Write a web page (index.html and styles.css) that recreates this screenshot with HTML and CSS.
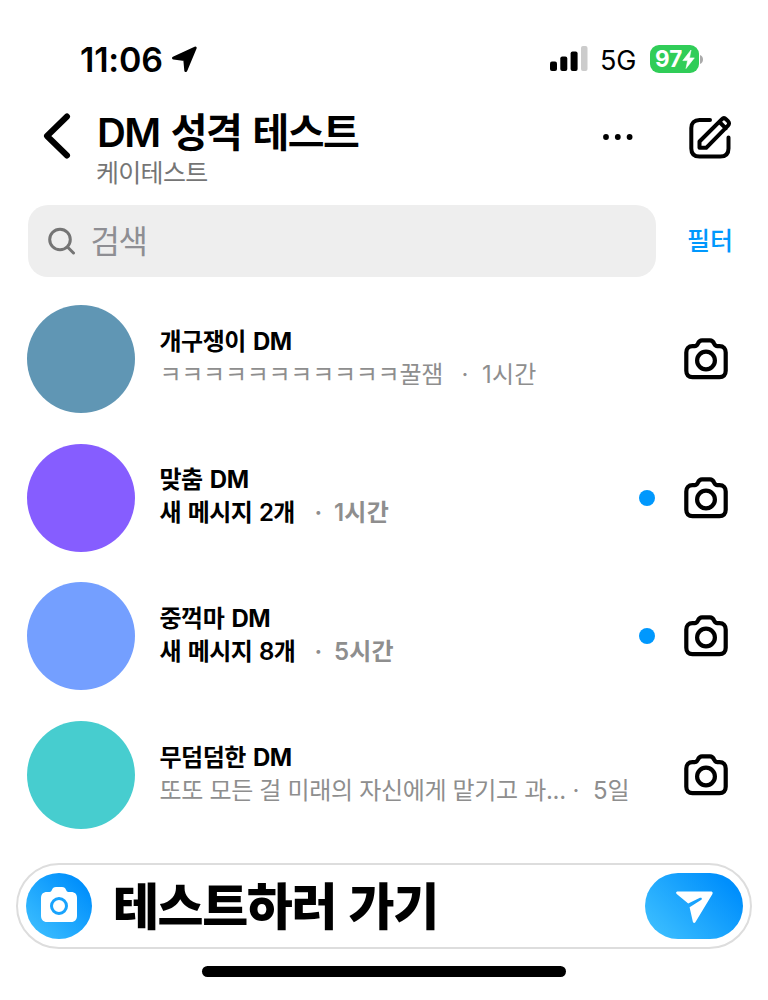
FILE: index.html
```html
<!DOCTYPE html>
<html lang="ko">
<head>
<meta charset="utf-8">
<title>DM 성격 테스트</title>
<link rel="stylesheet" href="styles.css">
</head>
<body>
<svg width="0" height="0" class="defs">
  <symbol id="camera" viewBox="0 0 44 42">
    <path d="M8.500 8.200h2.200c1.700 0 2.400-1 3.200-2.600C14.800 3.400 15.800 2.300 18 2.300h8c2.200 0 3.200 1.100 4.100 3.300.8 1.600 1.500 2.600 3.200 2.600h2.200c4 0 6.200 2.600 6.200 6.300v18.200c0 4-2.300 6.500-6.200 6.500h-27c-4 0-6.200-2.500-6.200-6.500V14.500c0-3.700 2.200-6.300 6.200-6.300z" fill="none" stroke="#000" stroke-width="4.200"/>
    <circle cx="22" cy="22.500" r="8.900" fill="none" stroke="#000" stroke-width="4.200"/>
  </symbol>
</svg>
<div class="phone">
  <header class="status">
    <span class="clock">11:06</span>
    <svg class="location" width="27" height="27" viewBox="0 0 27 27"><path d="M2.500 12 24.200 2 14.800 24.500 13.800 13.500z" stroke="#000" stroke-width="3" stroke-linejoin="round"/></svg>
    <svg class="signal" width="38" height="26" viewBox="0 0 38 26"><rect x="0" y="15.500" width="7" height="9.500" rx="2"/><rect x="10.300" y="10.500" width="7" height="14.500" rx="2"/><rect x="20.600" y="5.500" width="7" height="19.500" rx="2"/><rect x="31" y="0" width="6.500" height="25" rx="2" fill="#ccc"/></svg>
    <span class="network">5G</span>
    <span class="battery">97<svg width="13" height="19" viewBox="0 0 12 19"><path d="M8.500 0 .3 10.600h4.800L3.500 18.500 11.800 7.900H7z" fill="#fff" stroke="#fff" stroke-width=".6"/></svg></span>
    <svg class="cap" width="3" height="9" viewBox="0 0 3 9"><path d="M0 0c4 1.500 4 7.500 0 9z" fill="#aaa"/></svg>
  </header>

  <div class="titlebar">
    <svg class="back" width="28" height="46" viewBox="0 0 28 46"><path d="M24 3.500 4 23l20 19.500" fill="none" stroke="#000" stroke-width="6" stroke-linecap="round" stroke-linejoin="round"/></svg>
    <div class="heading">
      <h1>DM 성격 테스트</h1>
      <p>케이테스트</p>
    </div>
    <svg class="more" width="31" height="6" viewBox="0 0 31 6"><circle cx="4" cy="3" r="2.900"/><circle cx="15.800" cy="3" r="2.900"/><circle cx="27.600" cy="3" r="2.900"/></svg>
    <svg class="compose" width="46" height="46" viewBox="0 0 46 46" fill="none" stroke="#000" stroke-width="4" stroke-linecap="round" stroke-linejoin="round">
      <path d="M22 5H11.500C6.200 5 3.300 7.900 3.300 13v20.500c0 5.200 2.900 8 8.200 8h20.800c5.400 0 8.200-2.800 8.200-8V22.500"/>
      <path d="M11.500 26.500 33.700 4.300c1.400-1.400 3.100-1.400 4.500 0l1.800 1.800c1.400 1.400 1.400 3.100 0 4.500L18.200 32.800h-6.700zM32 7.500l5.800 5.800"/>
    </svg>
  </div>

  <div class="tools">
    <div class="search">
      <svg width="28" height="28" viewBox="0 0 28 28" fill="none" stroke="#757575" stroke-width="3" stroke-linecap="round"><circle cx="12" cy="12.500" r="10.300"/><path d="m19.500 20 6 6"/></svg>
      <span>검색</span>
    </div>
    <a class="filter">필터</a>
  </div>

  <main class="list">
    <article class="row">
      <div class="avatar steel"></div>
      <div class="text"><h2>개구쟁이 DM</h2><p><span class="message">ㅋㅋㅋㅋㅋㅋㅋㅋㅋㅋㅋ꿀잼</span><span class="dot">·</span><span class="time">1시간</span></p></div>
      <svg class="camera" width="44" height="42"><use href="#camera"/></svg>
    </article>
    <article class="row unread">
      <div class="avatar violet"></div>
      <div class="text"><h2>맞춤 DM</h2><p><span class="message">새 메시지 2개</span><span class="dot">·</span><span class="time">1시간</span></p></div>
      <i class="badge"></i>
      <svg class="camera" width="44" height="42"><use href="#camera"/></svg>
    </article>
    <article class="row unread">
      <div class="avatar periwinkle"></div>
      <div class="text"><h2>중꺽마 DM</h2><p><span class="message">새 메시지 8개</span><span class="dot">·</span><span class="time">5시간</span></p></div>
      <i class="badge"></i>
      <svg class="camera" width="44" height="42"><use href="#camera"/></svg>
    </article>
    <article class="row long">
      <div class="avatar teal"></div>
      <div class="text"><h2>무덤덤한 DM</h2><p><span class="message">또또 모든 걸 미래의 자신에게 맡기고 과...</span><span class="dot">·</span><span class="time">5일</span></p></div>
      <svg class="camera" width="44" height="42"><use href="#camera"/></svg>
    </article>
  </main>

  <div class="composer">
    <span class="shoot"><svg width="36" height="35" viewBox="0 0 36 35"><path fill="#fff" d="M6 5h2.500c1.400 0 1.800-.7 2.400-2 .7-1.900 1.900-3 4.100-3h6c2.200 0 3.400 1.100 4.100 3 .6 1.300 1 2 2.400 2H30c4 0 6 2.300 6 6v17.500c0 4-2 6.500-6 6.500H6c-4 0-6-2.500-6-6.500V11c0-3.700 2-6 6-6z"/><circle cx="18" cy="19" r="7.500" fill="none" stroke="#18a3fd" stroke-width="3"/></svg></span>
    <strong>테스트하러 가기</strong>
    <span class="send"><svg width="37" height="33" viewBox="0 0 37 33"><path fill="#fff" d="M1.800.5h33c1.700 0 2.300 1.200 1.500 2.700L19.500 31c-.8 1.500-2.500 1.200-2.700-.4L13.600 16.200 25 9c1.600-1 .8-2.900-1-2.200L12.200 12.500.7 3C-.5 1.900.1.500 1.800.5z"/></svg></span>
  </div>
  <div class="home"></div>
</div>
</body>
</html>
```
FILE: styles.css
```css
* { box-sizing: border-box; margin: 0; padding: 0; }
body { background: #fff; color: #000; font-family: Inter, "Noto Sans CJK KR", sans-serif; }
svg { display: block; flex: none; }
.defs { position: absolute; }
.phone { width: 768px; height: 1000px; overflow: hidden; display: flex; flex-direction: column; white-space: nowrap; }

.status { height: 74px; padding: 44px 0 0 80px; display: flex; align-items: center; }
.clock { width: 83px; padding-top: 1px; font-size: 34px; font-weight: 600; line-height: 30px; letter-spacing: -.2px; }
.location { margin-left: 8px; }
.signal { margin-left: 352px; }
.network { margin-left: 12px; width: 37px; padding-top: 3px; font-size: 27px; line-height: 30px; letter-spacing: -.1px; }
.battery { margin-left: 13px; width: 49px; height: 28px; border-radius: 9px; background: #30cd58; color: #fff; display: flex; align-items: center; padding-left: 5px; font-size: 22.500px; font-weight: 700; line-height: 28px; }
.cap { margin-left: 1px; }

.titlebar { height: 131px; display: flex; padding: 0 0 0 43px; }
.back { margin-top: 39px; }
.heading { margin-left: 26px; width: 505px; padding-top: 35px; }
h1 { font-size: 40px; font-weight: 600; line-height: 48px; letter-spacing: -1.600px; word-spacing: 2.800px; }
.heading p { margin: 1px 0 0 -1px; font-size: 25px; line-height: 30px; color: #757575; letter-spacing: -.7px; }
.more { margin-top: 60px; }
.compose { margin-left: 55px; margin-top: 41px; }

.tools { height: 72px; display: flex; align-items: center; padding-left: 28px; }
.search { width: 628px; height: 72px; border-radius: 20px; background: #eee; display: flex; align-items: center; padding-left: 20px; color: #8e8e93; font-size: 32px; line-height: 40px; letter-spacing: -1.400px; }
.search span { margin-left: 14.500px; padding-top: 1px; }
.filter { margin-left: 31px; color: #0098fd; font-size: 25px; font-weight: 500; line-height: 30px; }

.list { height: 567px; padding-top: 12.600px; flex: none; }
.row { height: 138.700px; display: flex; align-items: center; padding: 0 40px 0 27px; }
.avatar { width: 108px; height: 108px; border-radius: 50%; flex: none; }
.steel { background: #6096b4; }
.violet { background: #865dff; }
.periwinkle { background: #749fff; }
.teal { background: #47cdcf; }
.text { margin-left: 24.500px; flex: 1; padding-bottom: 1.600px; }
h2 { font-size: 24px; font-weight: 700; line-height: 33px; letter-spacing: -.5px; word-spacing: 2px; }
.text p { display: flex; font-size: 24px; line-height: 34px; color: #8e8e8e; letter-spacing: -.27px; }
.message { width: 302px; }
.dot { width: 20.500px; }
.text .time { letter-spacing: .2px; }
.unread p { font-weight: 600; letter-spacing: -.5px; }
.unread .message { color: #000; width: 155px; word-spacing: 1px; }
.unread .dot { width: 19.500px; }
.long .message { width: 413px; letter-spacing: -.33px; }
.long .time { letter-spacing: -.2px; }
.badge { width: 16px; height: 16px; border-radius: 50%; background: #0098fd; margin-right: 29.500px; }

.composer { flex: none; margin: 19px 0 0 16px; width: 736px; height: 86px; border: 2px solid #ddd; border-radius: 43px; display: flex; align-items: center; padding: 0 7px 0 8px; }
.shoot, .send { height: 66px; border-radius: 33px; display: flex; align-items: center; justify-content: center; background: linear-gradient(45deg, #42c3ff, #008ffc 85%); }
.shoot { width: 66px; padding-bottom: 4px; }
.send { width: 98px; margin-left: auto; padding-top: 3px; }
.composer strong { margin-left: 21px; padding-top: 2px; font-size: 50px; font-weight: 900; line-height: 66px; letter-spacing: -1.400px; word-spacing: 4px; }
.home { flex: none; margin: 17px 0 0 202px; width: 364px; height: 11px; border-radius: 6px; background: #000; }
```
